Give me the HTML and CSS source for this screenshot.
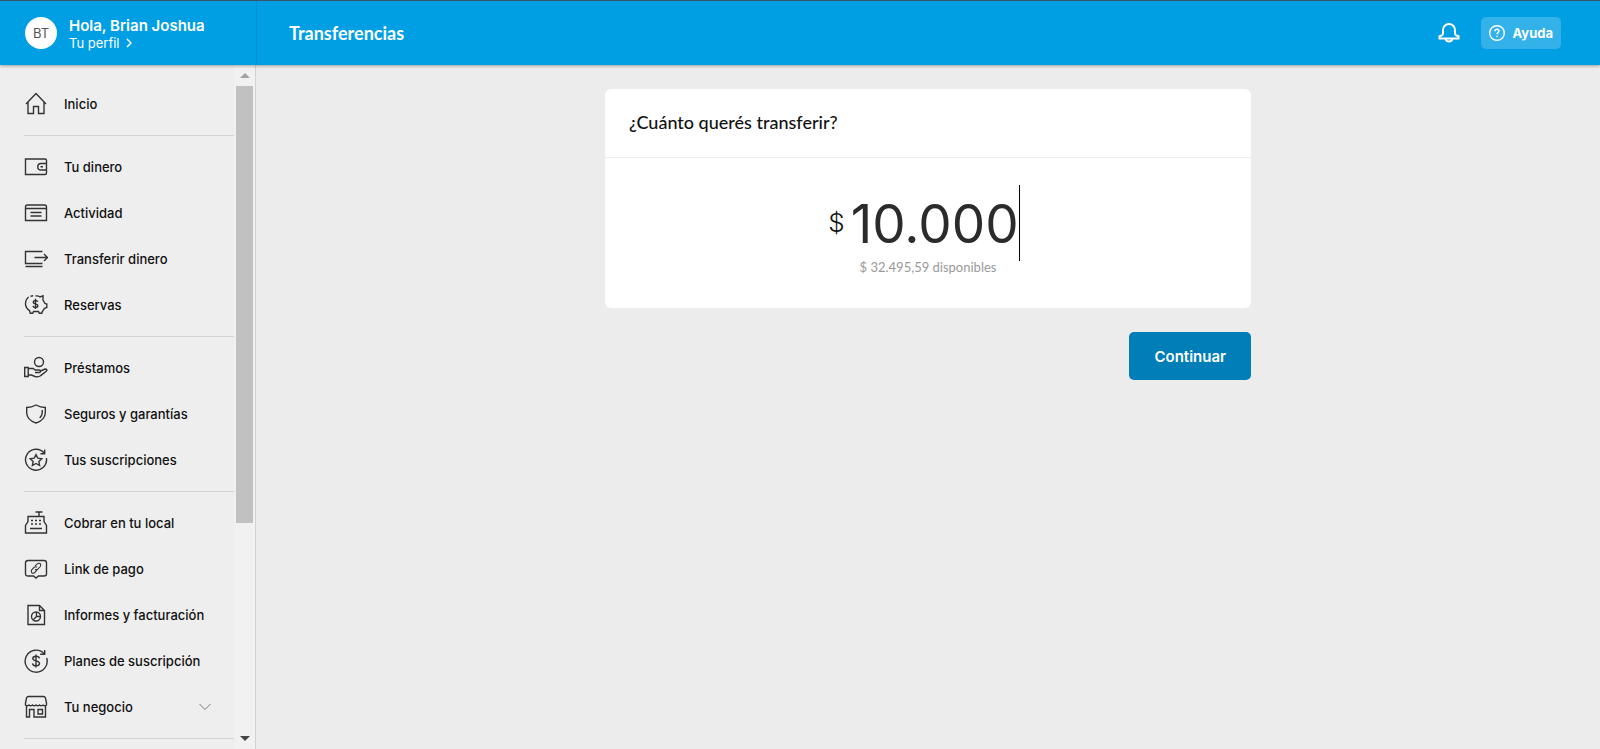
FILE: index.html
```html
<!DOCTYPE html>
<html lang="es">
<head>
    <meta charset="UTF-8">
    <meta name="viewport" content="width=device-width, initial-scale=1.0">
    <title>Transferencias</title>
    <link rel="stylesheet" href="styles.css">
</head>
<body>
    <header class="header">
        <a class="profile" href="#">
            <span class="avatar">BT</span>
            <span class="profile-text">
                <strong class="profile-name">Hola, Brian Joshua</strong>
                <span class="profile-link">Tu perfil
                    <svg width="6" height="10" viewBox="0 0 6 10"><path d="M1 1l4 4-4 4"/></svg>
                </span>
            </span>
        </a>
        <h1 class="title">Transferencias</h1>
        <button class="bell" type="button" aria-label="Notificaciones">
            <svg width="22" height="22" viewBox="0 0 22 22"><path d="M5 8a6 6 0 0 1 12 0v3.500q0 1.500 1.500 2l2 .8v2.200h-19v-2.200l2-.8q1.500-.5 1.500-2zM7.500 16.700a3.600 3.600 0 0 0 7 0"/></svg>
        </button>
        <a class="help" href="#">
            <svg width="16" height="16" viewBox="0 0 16 16"><circle cx="8" cy="8" r="7.300"/><path d="M6 6.200q0-2 2-2t2 1.800c0 1.400-2 1.400-2 3.200M8 10.700v1.300"/></svg>
            Ayuda
        </a>
    </header>

    <div class="layout">
        <aside class="sidebar">
            <nav class="menu">
                <ul>
                    <li><a href="#">
                        <svg viewBox="0 0 24 24"><path d="M2 12L12 1.500 22 12M4 10v11.500h5.500v-7h5v7H20V10"/></svg>
                        Inicio</a></li>
                </ul>
                <ul>
                    <li><a href="#">
                        <svg viewBox="0 0 24 24"><path d="M22.500 8.500V5.500q0-1.500-1.500-1.500H1.500v15.500H21q1.500 0 1.500-1.500V15M22.500 8.500h-5.500a3.200 3.200 0 0 0 0 6.500h5.500zM16.500 11.800h2.500"/></svg>
                        Tu dinero</a></li>
                    <li><a href="#">
                        <svg viewBox="0 0 24 24"><path d="M1.500 7.500V6q0-2 2-2h17q2 0 2 2v13.500h-21zh21M6.500 11.500h11M6.500 15h11"/></svg>
                        Actividad</a></li>
                    <li><a href="#">
                        <svg viewBox="0 0 24 24"><path d="M18.500 4.500h-17v12h17M10.500 10.500h13M20 7l3.500 3.500L20 14M1.500 19.500h17"/></svg>
                        Transferir dinero</a></li>
                    <li><a href="#">
                        <svg viewBox="0 0 24 24"><path d="M11.500 3q2.500-.5 4.500 1l3-1.200v4.200l2 3.500 1.800.5v3.500l-2.300.8-2.200 3.200-.5 1.800h-2.500L14.500 18.500h-5l-.8 1.800H6.200L5.700 17.800C3 16 1.500 13.500 1.500 10.800q0-4.300 3.200-6.800M6.500 3.300Q7.700 2.800 9.200 2.800"/><path d="M13.700 8.800Q13.300 7.500 11.400 7.500T9.200 9.200c0 2.300 4.700 1.100 4.700 3.500 0 1.200-1 1.700-2.500 1.700q-2.200 0-2.400-1.600M11.500 5.800v10.300"/></svg>
                        Reservas</a></li>
                </ul>
                <ul>
                    <li><a href="#">
                        <svg viewBox="0 0 24 24"><circle cx="15" cy="6" r="4.500"/><path d="M.7 11.500h3.500v9H.7zM4.200 12.500h5l2 1.500H15q1.500 0 1.500 1.300t-1.500 1.200h-4M16.500 15l4.500-2q1.500 0 2 1c.1 1.300-5 4.500-7 6q-2.500 1.500-5 .5L7.500 19H4.200"/></svg>
                        Préstamos</a></li>
                    <li><a href="#">
                        <svg viewBox="0 0 24 24"><path d="M12 3q4.500 2.500 9.300 2.500v5.500q-.3 7-9.300 10Q3 18 2.700 11V5.500Q7.500 5.500 12 3zM18.200 8v3q-.2 3-2.500 5"/></svg>
                        Seguros y garantías</a></li>
                    <li><a href="#">
                        <svg viewBox="0 0 24 24"><path d="M20.500 5.500A10.500 10.500 0 1 0 22.400 10M20.700 1.500v4.300h-4.300M12 6.500l1.800 3.700 4 .5-2.900 2.800.7 4-3.600-2-3.600 2 .7-4-2.900-2.800 4-.5z"/></svg>
                        Tus suscripciones</a></li>
                </ul>
                <ul>
                    <li><a href="#">
                        <svg viewBox="0 0 24 24"><path d="M11.500 1h7M15 1v4M1.500 22v-7.500L4 10.500V5.500h16v5l2.500 4V22zM6 17.500h12"/><path stroke-width="1.500" d="M7 9.500h2M11 9.500h2M15 9.500h2M7 13h2M11 13h2M15 13h2"/></svg>
                        Cobrar en tu local</a></li>
                    <li><a href="#">
                        <svg viewBox="0 0 24 24"><path d="M4 3.500h16q2.500 0 2.500 2.500v11q0 2-2.500 2h-5.500l-2.500 2-2.500-2H4q-2.500 0-2.500-2V6q0-2.500 2.500-2.500z"/><path stroke-width="1.100" d="M11 9.200l2.500-2.500q1.500-1 2.800 0 1 1.300 0 2.800l-2.500 2.700q-1.400 1-2.800 0M13 13.200l-2.500 2.500q-1.500 1-2.800 0-1-1.300 0-2.800l2.500-2.700q1.400-1 2.800 0"/></svg>
                        Link de pago</a></li>
                    <li><a href="#">
                        <svg viewBox="0 0 24 24"><path d="M15.500 2.500H4v19h16.500V7.500zv5h5"/><circle cx="12" cy="13.500" r="4.500"/><path d="M12.500 9v4.500h4M12.500 13.500l-3 3"/></svg>
                        Informes y facturación</a></li>
                    <li><a href="#">
                        <svg viewBox="0 0 24 24"><path d="M20.500 5A11 11 0 1 0 22.700 9M20.700 1v4.300h-4.500"/><path d="M15.500 9.300Q15 7.300 12 7.300T8.800 9.500c0 3.300 6.700 1.500 6.700 5 0 1.600-1.300 2.300-3.500 2.300s-3.300-.8-3.500-2.500M12 5.500v13"/></svg>
                        Planes de suscripción</a></li>
                    <li><a href="#">
                        <svg viewBox="0 0 24 24"><path d="M4.500 1.500h15q1.500 0 2 1.500l1 5v2q-1.500 1.500-3.500 0-2 1.500-3.500 0-2 1.500-3.500 0-2 1.500-3.500 0-2 1.500-3.500 0-2 1.500-3.500 0V8l1-5q.5-1.500 2-1.500zM2.500 11v11h3V14.500h4.500V22h11.500V11M14 14.500h4.500V19H14z"/></svg>
                        Tu negocio
                        <svg class="chevron" viewBox="0 0 12 8"><path d="M.5 1L6 6.500 11.500 1"/></svg></a></li>
                </ul>
            </nav>
            <div class="scrollbar" aria-hidden="true">
                <span class="arrow arrow-up"></span>
                <span class="track"><span class="thumb"></span></span>
                <span class="arrow arrow-down"></span>
            </div>
        </aside>

        <main class="content">
            <form class="transfer">
                <section class="card">
                    <h2 class="card-title"><label for="amount">¿Cuánto querés transferir?</label></h2>
                    <div class="card-body">
                        <div class="amount">
                            <span class="currency">$</span>
                            <input class="amount-input" type="text" id="amount" name="amount" value="10.000" inputmode="numeric" autocomplete="off">
                            <span class="caret"></span>
                        </div>
                        <p class="available">$ 32.495,59 disponibles</p>
                    </div>
                </section>
                <button class="continue" type="submit">Continuar</button>
            </form>
        </main>
    </div>
</body>
</html>
```

FILE: styles.css
```css
* {
    box-sizing: border-box;
}
body {
    font-family: Inter, "Liberation Sans", sans-serif;
    margin: 0;
    height: 100vh;
    display: flex;
    flex-direction: column;
    overflow: hidden;
    background-color: #ececec;
    color: #111;
}
a {
    color: inherit;
    text-decoration: none;
}
button {
    font-family: inherit;
    border: 0;
    cursor: pointer;
}
svg {
    flex: none;
    fill: none;
    stroke: currentColor;
}
.header {
    display: flex;
    align-items: center;
    flex: none;
    height: 65px;
    padding-right: 39px;
    border-top: 1px solid #3b5368;
    background-color: #009ee3;
    color: #fff;
    box-shadow: 0 1px 3px rgba(0, 0, 0, 0.35);
    z-index: 1;
}
.profile {
    display: flex;
    align-items: center;
    gap: 12px;
    width: 257px;
    height: 100%;
    padding-left: 25px;
    border-right: 1px solid #0090d0;
}
.avatar {
    width: 32px;
    height: 32px;
    border-radius: 50%;
    background-color: #fff;
    color: #555;
    font-size: 13px;
    line-height: 32px;
    text-align: center;
}
.profile-text {
    display: flex;
    flex-direction: column;
    padding-top: 2px;
}
.profile-name {
    font-size: 15px;
    font-weight: 600;
    line-height: 18px;
}
.profile-link {
    display: flex;
    align-items: center;
    gap: 6px;
    font-size: 13px;
    line-height: 16px;
}
.profile-link svg {
    stroke-width: 1.5;
}
.title {
    flex: 1;
    margin: 0;
    padding-left: 32px;
    font-family: Lato, sans-serif;
    font-size: 18px;
    font-weight: 700;
}
.bell {
    display: flex;
    padding: 0;
    margin-right: 21px;
    background: none;
    color: #fff;
}
.bell svg {
    stroke-width: 2;
}
.help {
    display: flex;
    align-items: center;
    gap: 8px;
    height: 32px;
    padding: 0 8px;
    border-radius: 5px;
    background-color: #33b1e9;
    font-size: 13px;
    font-weight: 700;
}
.help svg {
    stroke-width: 1.4;
}
.layout {
    display: flex;
    flex: 1;
    min-height: 0;
}
.sidebar {
    display: flex;
    flex: none;
    width: 256px;
    border-right: 1px solid #d2d2d2;
    background-color: #eee;
}
.menu {
    flex: 1;
    padding: 16px 0 0 24px;
    overflow: hidden;
}
.menu ul {
    list-style: none;
    margin: 0 0 8px;
    padding: 0 0 8px;
    border-bottom: 1px solid #d2d2d2;
}
.menu a {
    display: flex;
    align-items: center;
    gap: 16px;
    height: 46px;
    font-size: 13px;
    font-weight: 500;
}
.menu svg {
    width: 24px;
    height: 24px;
    color: #333;
    stroke-width: 1.4;
}
.menu .chevron {
    width: 12px;
    height: 8px;
    margin-left: auto;
    margin-right: 23px;
    color: #777;
    stroke-width: 1;
}
.scrollbar {
    display: flex;
    flex-direction: column;
    width: 21px;
    padding: 0 2px;
    background-color: #f1f1f1;
}
.arrow {
    width: 0;
    height: 0;
    margin: 8px auto;
    border: 5px solid transparent;
}
.arrow-up {
    border-top: 0;
    border-bottom-color: #a3a3a3;
}
.arrow-down {
    border-bottom: 0;
    border-top-color: #444;
}
.track {
    flex: 1;
}
.thumb {
    display: block;
    height: 68%;
    background-color: #c1c1c1;
}
.content {
    flex: 1;
    padding: 24px;
}
.transfer {
    display: flex;
    flex-direction: column;
    max-width: 646px;
    margin: 0 auto;
}
.card {
    border-radius: 6px;
    background-color: #fff;
}
.card-title {
    margin: 0;
    padding: 21px 24px 22px;
    border-bottom: 1px solid #ededed;
    font-family: Lato, sans-serif;
    font-size: 18px;
    font-weight: 500;
    line-height: 25px;
}
.card-body {
    padding: 27px 24px 35px;
}
.amount {
    display: flex;
    justify-content: center;
    height: 76px;
    padding-right: 8px;
}
.currency {
    margin-right: 6px;
    font-size: 26px;
    font-weight: 300;
    line-height: 76px;
}
.amount-input {
    width: 168px;
    padding: 2px 0 0;
    border: 0;
    outline: 0;
    background: none;
    color: #2b2b2b;
    font-family: inherit;
    font-size: 53px;
    font-weight: 400;
}
.caret {
    width: 1px;
    background-color: #000;
}
.available {
    margin: 0;
    color: #999;
    font-family: Lato, sans-serif;
    font-size: 13px;
    line-height: 12px;
    text-align: center;
}
.continue {
    align-self: flex-end;
    height: 48px;
    margin-top: 24px;
    padding: 0 25px;
    border-radius: 5px;
    background-color: #007eb8;
    color: #fff;
    font-size: 15px;
    font-weight: 600;
}
```
